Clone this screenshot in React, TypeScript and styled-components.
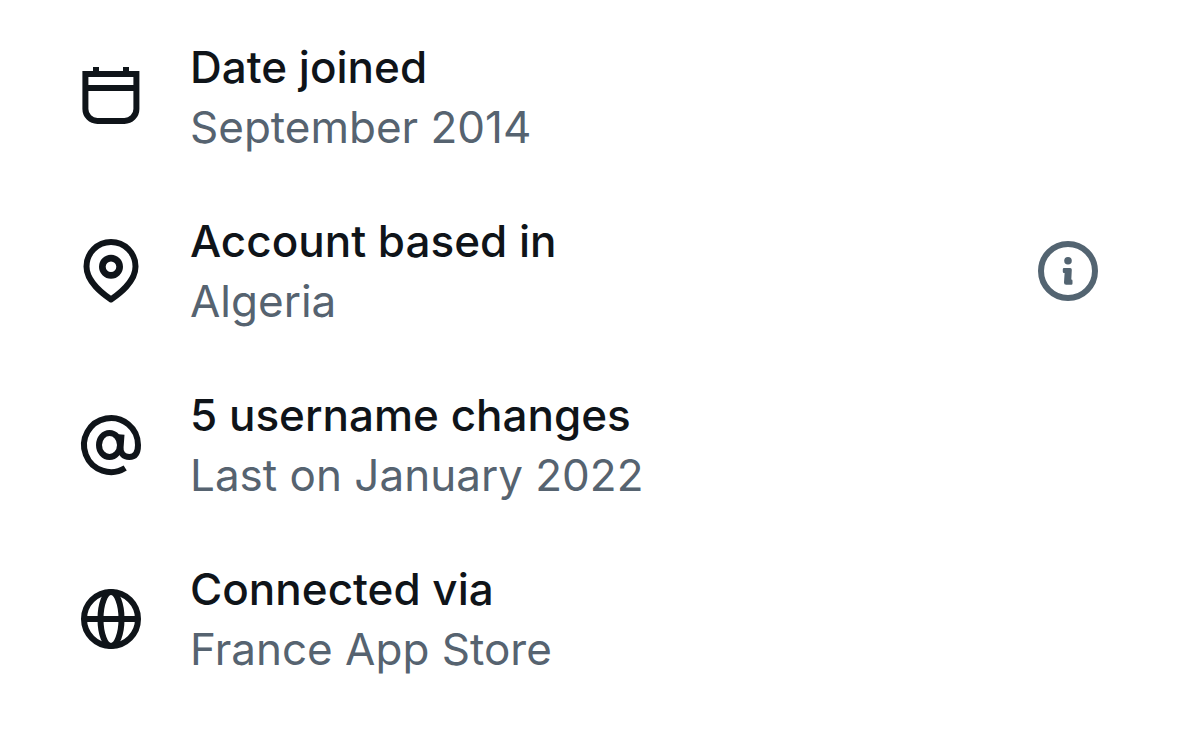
import React from "react";
import styled, { createGlobalStyle } from "styled-components";

const GlobalStyle = createGlobalStyle`
  * { box-sizing: border-box; }
  body {
    margin: 0;
    background: #ffffff;
    font-family: Inter, "Liberation Sans", sans-serif;
  }
`;

const DetailList = styled.ul`
  display: flex;
  flex-direction: column;
  gap: 54px;
  margin: 0;
  padding: 37px 75px;
  list-style: none;
`;

const DetailRow = styled.li`
  display: flex;
  align-items: center;
`;

const Details = styled.div`
  flex: 1;
  min-width: 0;
  margin-left: 43px;
`;

const Line = styled.p<{ $muted?: boolean }>`
  margin: 0;
  font-size: 44px;
  line-height: 60px;
  font-weight: ${({ $muted }) => ($muted ? 400 : 500)};
  color: ${({ $muted }) => ($muted ? "#566370" : "#0f1419")};
`;

const Icon = styled.svg`
  display: block;
  flex: none;
  width: 72px;
  height: 72px;
  fill: none;
  stroke: currentColor;
  stroke-width: 6;
  color: #0f1419;
`;

const InfoButton = styled.button`
  padding: 0;
  border: 0;
  background: none;
  cursor: pointer;

  ${Icon} {
    color: #536471;
  }
`;

const CalendarIcon = () => (
  <Icon viewBox="0 0 72 72" aria-hidden="true">
    <path d="M10.4 13H61.4V48A12 12 0 0 1 49.4 60H22.4A12 12 0 0 1 10.4 48Z" />
    <path d="M10.4 27H61.4M21 6V13M51 6V13" />
  </Icon>
);

const PinIcon = () => (
  <Icon viewBox="0 0 72 72" aria-hidden="true" strokeLinejoin="round">
    <path d="M36 64.5C29 59.5 11.5 47.5 11.5 31.5A24.5 24.5 0 0 1 60.5 31.5C60.5 47.5 43 59.5 36 64.5Z" />
    <path
      fill="currentColor"
      fillRule="evenodd"
      stroke="none"
      d="M36 19.7a12 12 0 1 0 0 24a12 12 0 1 0 0-24ZM36 26.4a5.3 5.3 0 1 1 0 10.6a5.3 5.3 0 1 1 0-10.6Z"
    />
  </Icon>
);

const AtIcon = () => (
  <Icon viewBox="0 0 72 72" aria-hidden="true">
    <path d="M50.2 59A27 27 0 1 1 63 36C63 43.5 60.5 48 54.3 48C48.5 48 45 44 45.6 38L46.5 25.5" />
    <ellipse cx="34.5" cy="36" rx="10.5" ry="12" />
  </Icon>
);

const GlobeIcon = () => (
  <Icon viewBox="0 0 72 72" aria-hidden="true">
    <circle cx="36" cy="36" r="27" />
    <ellipse cx="36" cy="36" rx="10.5" ry="27" />
    <path d="M9 36H63" />
  </Icon>
);

const InfoIcon = () => (
  <Icon viewBox="0 0 72 72" aria-hidden="true">
    <circle cx="36" cy="36" r="27" />
    <g fill="currentColor" stroke="none">
      <circle cx="36" cy="25.7" r="3.8" />
      <path d="M32 33H38.2Q39.9 33 39.8 34.7L39.3 44.5Q40.5 44.5 40.5 45.7V48.6Q40.5 49.8 39.3 49.8H34.2Q31.9 49.8 32 47.5L32.6 38H32Q30.8 38 30.8 36.8V34.2Q30.8 33 32 33Z" />
    </g>
  </Icon>
);

const items = [
  { icon: <CalendarIcon />, title: "Date joined", value: "September 2014" },
  { icon: <PinIcon />, title: "Account based in", value: "Algeria", info: true },
  { icon: <AtIcon />, title: "5 username changes", value: "Last on January 2022" },
  { icon: <GlobeIcon />, title: "Connected via", value: "France App Store" },
];

export default function App() {
  return (
    <main>
      <GlobalStyle />
      <DetailList>
        {items.map((item) => (
          <DetailRow key={item.title}>
            {item.icon}
            <Details>
              <Line>{item.title}</Line>
              <Line $muted>{item.value}</Line>
            </Details>
            {item.info && (
              <InfoButton type="button" aria-label="More information">
                <InfoIcon />
              </InfoButton>
            )}
          </DetailRow>
        ))}
      </DetailList>
    </main>
  );
}
